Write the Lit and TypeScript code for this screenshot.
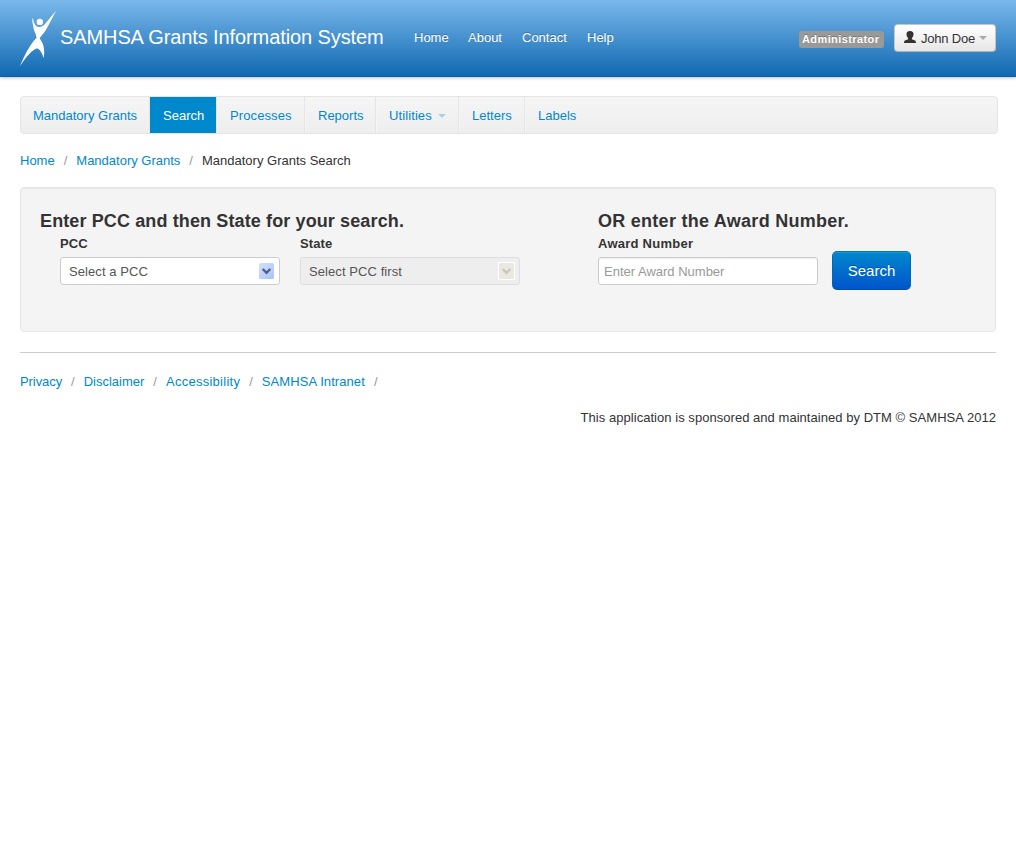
import { LitElement, html, css } from "lit";
import { customElement } from "lit/decorators.js";

@customElement("app-root")
export class AppRoot extends LitElement {
  static styles = css`
    :host {
      display: block;
      height: 847px;
      overflow: hidden;
      background: #fff;
      color: #333;
      font: 13px/18px "Liberation Sans", Arial, sans-serif;
    }
    * { box-sizing: border-box; }
    a { color: #08c; text-decoration: none; }
    ul { list-style: none; margin: 0; padding: 0; display: flex; }
    .topbar {
      height: 77px;
      display: flex;
      align-items: flex-start;
      padding: 0 20px;
      color: #fff;
      background: linear-gradient(#7ab8eb, #0f68b1);
      box-shadow: 0 1px 3px rgba(0, 0, 0, 0.25), inset 0 -1px 0 rgba(0, 0, 0, 0.1);
    }
    .topbar a { color: #fff; }
    .logo { width: 39px; height: 58px; margin: 10px 0 0 -1px; flex: none; }
    .brand {
      width: 334px;
      margin: 25px 0 0 2px;
      font-size: 20px;
      line-height: 24px;
      letter-spacing: -0.1px;
      white-space: nowrap;
    }
    .menu { margin-top: 29px; padding-left: 20px; text-shadow: 0 -1px 0 rgba(0, 0, 0, 0.25); }
    .menu li { margin-right: 20px; white-space: nowrap; }
    .menu .home { width: 34px; }
    .menu .about { width: 34px; }
    .menu .contact { width: 45px; }
    .role {
      margin: 31px 10px 0 auto;
      width: 85px;
      height: 17px;
      padding: 1px 3px 2px;
      border-radius: 3px;
      background: #999;
      font-weight: bold;
      font-size: 11px;
      line-height: 14px;
      letter-spacing: 0.4px;
      text-shadow: 0 -1px 0 rgba(0, 0, 0, 0.25);
      white-space: nowrap;
    }
    .user {
      width: 102px;
      height: 28px;
      margin-top: 24px;
      padding: 1px 8px 0 9px;
      display: flex;
      align-items: center;
      border: 1px solid #c5c5c5;
      border-bottom-color: #b3b3b3;
      border-radius: 4px;
      background: linear-gradient(#fff, #e6e6e6);
      color: #333;
      font: inherit;
      letter-spacing: -0.2px;
      white-space: nowrap;
    }
    .person { width: 12px; height: 12px; margin: 0 5px 3px 0; flex: none; }
    .caret {
      width: 0;
      height: 0;
      border: 4px solid transparent;
      border-top-color: currentColor;
      border-bottom: 0;
      opacity: 0.3;
    }
    .user .caret { margin: 0 0 1px auto; border-top-color: #000; }
    .subnav {
      height: 38px;
      margin: 19px 18px 0 20px;
      border: 1px solid #e5e5e5;
      border-radius: 4px;
      background: linear-gradient(#f5f5f5, #eee);
    }
    .subnav li {
      height: 36px;
      padding: 10px 0 0 12px;
      border-left: 1px solid #f5f5f5;
      border-right: 1px solid #e5e5e5;
      white-space: nowrap;
    }
    .subnav li:first-child { border-left: 0; padding-left: 12px; width: 129px; }
    .subnav .active { width: 67px; background: #08c; border-color: #08c #e5e5e5 #08c #08c; }
    .subnav .active a { color: #fff; }
    .subnav .processes { width: 88px; letter-spacing: 0.1px; }
    .subnav .reports { width: 71px; }
    .subnav .utilities { width: 83px; letter-spacing: 0.1px; }
    .subnav .letters { width: 66px; }
    .subnav li:last-child { border-right: 0; }
    .utilities a { display: flex; align-items: center; }
    .utilities .caret { margin: 0 0 1px 6px; }
    .crumbs { margin: 18px 20px 0; white-space: nowrap; }
    .sep { color: #999; padding: 0 9px; }
    .well {
      height: 145px;
      margin: 17px 20px 0;
      padding: 23px 19px 0;
      display: flex;
      border: 1px solid #e5e5e5;
      border-radius: 4px;
      background: #f4f4f4;
      box-shadow: inset 0 1px 1px rgba(0, 0, 0, 0.05);
    }
    .by-pcc { width: 558px; }
    h3 {
      margin: 0;
      font-size: 18px;
      line-height: 20px;
      letter-spacing: 0.12px;
      white-space: nowrap;
    }
    .by-award h3 { letter-spacing: 0.27px; }
    .fields { display: flex; align-items: flex-start; gap: 20px; padding-left: 20px; }
    .by-award .fields { padding-left: 0; gap: 14px; }
    .label { display: block; margin: 4px 0; font-weight: bold; letter-spacing: 0.1px; }
    .by-award .label { letter-spacing: 0.25px; }
    .select, .input {
      width: 220px;
      height: 28px;
      border: 1px solid #ccc;
      border-radius: 3px;
      background: #fff;
      color: #555;
    }
    .select {
      display: flex;
      align-items: center;
      justify-content: space-between;
      padding: 0 5px 0 8px;
      letter-spacing: 0.08px;
    }
    .select span { padding-top: 2px; }
    .select.disabled { background: #eee; border-color: #ddd; padding-right: 4px; }
    .arrow { width: 15px; height: 16px; flex: none; }
    .disabled .arrow { width: 17px; height: 18px; }
    .input {
      display: block;
      padding: 0 5px;
      font: inherit;
      box-shadow: inset 0 1px 1px rgba(0, 0, 0, 0.075);
    }
    .input::placeholder { color: #999; opacity: 1; }
    .search {
      width: 79px;
      height: 39px;
      margin-top: 20px;
      padding: 0;
      border: 1px solid #0467b4;
      border-color: #0477b8 #0467b4 #04509c;
      border-radius: 5px;
      background: linear-gradient(#08c, #05c);
      box-shadow: inset 0 1px 0 rgba(255, 255, 255, 0.1);
      color: #fff;
      font: 15px/20px "Liberation Sans", Arial, sans-serif;
      text-shadow: 0 -1px 0 rgba(0, 0, 0, 0.25);
    }
    .rule { height: 1px; margin: 20px 20px 0; background: #ccc; }
    .links { margin: 20px 20px 0; white-space: nowrap; }
    .links .privacy { letter-spacing: -0.08px; }
    .links .access { letter-spacing: 0.26px; }
    .links .intranet { letter-spacing: 0.08px; }
    .credit {
      margin: 18px 20px 0;
      text-align: right;
      letter-spacing: 0.04px;
      white-space: nowrap;
    }
  `;

  render() {
    return html`
      <header class="topbar">
        <svg class="logo" viewBox="0 0 39 58" fill="#fff">
          <circle cx="20.8" cy="11.900" r="3.200" />
          <path d="M37.500 0.500C34 6 28.500 18 25.500 22C23.500 25 21 27 20.800 28.500C22 31 24 33 24.500 36C25.300 40 25.500 44 24.700 48C23.500 44.500 21.500 39.500 18.500 38.500C14 38.500 7.500 46.500 1 56C5 46 11.500 33.500 17.500 28C17.500 24 14.500 21 14.200 16C13.500 13 13 10 13.500 7.500C14.500 10 15 14 17 15.800C19.500 18 23.500 16.800 25.500 14.500C29.500 10 33.500 4.500 37.500 0.500Z" />
        </svg>
        <div class="brand">SAMHSA Grants Information System</div>
        <ul class="menu">
          <li class="home"><a href="#">Home</a></li>
          <li class="about"><a href="#">About</a></li>
          <li class="contact"><a href="#">Contact</a></li>
          <li><a href="#">Help</a></li>
        </ul>
        <span class="role">Administrator</span>
        <button class="user">
          <svg class="person" viewBox="0 0 12 12" fill="#333">
            <path d="M6 0C8.500 0 9.700 1.300 9.500 3.300C9.400 5 8.800 6.200 7.900 7.200V8.200L11 9.400C11.700 9.800 12 10.500 12 12H0C0 10.500 0.300 9.800 1 9.400L4.100 8.200V7.200C3.200 6.200 2.600 5 2.500 3.300C2.300 1.300 3.500 0 6 0Z" />
          </svg>
          John Doe<span class="caret"></span>
        </button>
      </header>
      <ul class="subnav">
        <li><a href="#">Mandatory Grants</a></li>
        <li class="active"><a href="#">Search</a></li>
        <li class="processes"><a href="#">Processes</a></li>
        <li class="reports"><a href="#">Reports</a></li>
        <li class="utilities"><a href="#">Utilities<span class="caret"></span></a></li>
        <li class="letters"><a href="#">Letters</a></li>
        <li><a href="#">Labels</a></li>
      </ul>
      <nav class="crumbs"><a href="#">Home</a><span class="sep">/</span><a href="#">Mandatory Grants</a><span class="sep">/</span>Mandatory Grants Search</nav>
      <section class="well">
        <div class="by-pcc">
          <h3>Enter PCC and then State for your search.</h3>
          <div class="fields">
            <div>
              <span class="label">PCC</span>
              <div class="select">
                <span>Select a PCC</span>
                <svg class="arrow" viewBox="0 0 15 16">
                  <defs>
                    <linearGradient id="blue" x2="1" y2="1">
                      <stop stop-color="#d3e0fd" />
                      <stop offset="1" stop-color="#a9c3f7" />
                    </linearGradient>
                  </defs>
                  <rect width="15" height="16" rx="1.500" fill="url(#blue)" />
                  <path d="M3.700 6L7.500 9.800L11.300 6" fill="none" stroke="#4d6185" stroke-width="2.400" />
                </svg>
              </div>
            </div>
            <div>
              <span class="label">State</span>
              <div class="select disabled">
                <span>Select PCC first</span>
                <svg class="arrow" viewBox="0 0 17 18">
                  <rect width="17" height="18" fill="#fff" />
                  <rect x="1" y="1" width="15" height="16" rx="1.500" fill="#e9e9e1" />
                  <path d="M4.700 7L8.500 10.800L12.300 7" fill="none" stroke="#c7c7bf" stroke-width="2.400" />
                </svg>
              </div>
            </div>
          </div>
        </div>
        <div class="by-award">
          <h3>OR enter the Award Number.</h3>
          <div class="fields">
            <div>
              <span class="label">Award Number</span>
              <input class="input" placeholder="Enter Award Number" />
            </div>
            <button class="search">Search</button>
          </div>
        </div>
      </section>
      <div class="rule"></div>
      <nav class="links"><a class="privacy" href="#">Privacy</a><span class="sep">/</span><a href="#">Disclaimer</a><span class="sep">/</span><a class="access" href="#">Accessibility</a><span class="sep">/</span><a class="intranet" href="#">SAMHSA Intranet</a><span class="sep">/</span></nav>
      <div class="credit">This application is sponsored and maintained by DTM © SAMHSA 2012</div>
    `;
  }
}
